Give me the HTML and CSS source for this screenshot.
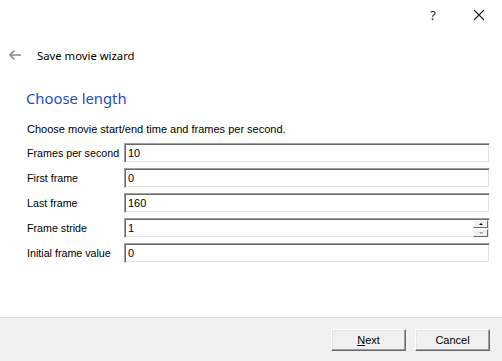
FILE: index.html
```html
<!DOCTYPE html>
<html lang="en">
<head>
  <meta charset="UTF-8">
  <title>Save movie wizard</title>
  <link rel="stylesheet" href="styles.css">
</head>
<body>

  <div class="window">
    <div class="titlebar">
      <span class="title-btn help">?</span>
      <span class="title-btn close">
        <svg width="12" height="12" viewBox="0 0 12 12"><path d="M1 1L11 11M11 1L1 11" stroke="#222" stroke-width="1.1" fill="none"/></svg>
      </span>
    </div>

    <div class="header">
      <svg class="back" width="14" height="12" viewBox="0 0 14 12"><path d="M13 6H2M6.5 1.5L2 6l4.5 4.5" stroke="#8a8a8a" stroke-width="1.6" fill="none"/></svg>
      <span class="wizard-title">Save movie wizard</span>
    </div>

    <div class="content">
      <h1>Choose length</h1>
      <p class="desc">Choose movie start/end time and frames per second.</p>

      <div class="form">
        <label>Frames per second</label>
        <div class="field">10</div>

        <label>First frame</label>
        <div class="field">0</div>

        <label>Last frame</label>
        <div class="field">160</div>

        <label>Frame stride</label>
        <div class="field spin">
          1
          <div class="spin-btns">
            <span class="spin-btn"><i class="up"></i></span>
            <span class="spin-btn"><i class="down"></i></span>
          </div>
        </div>

        <label>Initial frame value</label>
        <div class="field">0</div>
      </div>
    </div>

    <div class="footer">
      <button class="btn"><u>N</u>ext</button>
      <button class="btn">Cancel</button>
    </div>
  </div>

</body>
</html>
```

FILE: styles.css
```css
body {
  margin: 0;
  background: #fff;
  font-family: 'Liberation Sans', Arial, sans-serif;
  font-size: 11px;
  color: #000;
}

.window {
  width: 502px;
  height: 361px;
  display: flex;
  flex-direction: column;
  overflow: hidden;
}

.titlebar {
  height: 30px;
  display: flex;
  justify-content: flex-end;
  align-items: center;
}

.title-btn {
  width: 46px;
  height: 30px;
  display: flex;
  align-items: center;
  justify-content: center;
}

.help {
  font-family: 'Noto Sans', sans-serif;
  font-size: 13px;
  color: #222;
}

.header {
  height: 20px;
  margin-top: 15px;
  display: flex;
  align-items: center;
  padding-left: 8px;
}

.back {
  margin-right: 15px;
}

.wizard-title {
  font-family: 'Noto Sans', sans-serif;
  font-size: 11.3px;
  color: #000;
}

.content {
  flex: 1;
  padding: 0 12px 0 27px;
}

h1 {
  font-family: 'Noto Sans', sans-serif;
  font-weight: normal;
  font-size: 14.8px;
  color: #1c4fc4;
  margin: 22px 0 0 -1px;
  line-height: 22px;
}

.desc {
  margin: 14px 0 0;
  line-height: 13px;
}

.form {
  margin-top: 7px;
  display: grid;
  grid-template-columns: 97px 1fr;
  row-gap: 5px;
  align-items: center;
}

.form label {
  font-size: 10.7px;
}

.field {
  height: 20px;
  box-sizing: border-box;
  border-top: 1px solid #a0a0a0;
  border-left: 1px solid #a0a0a0;
  border-right: 1px solid #fff;
  border-bottom: 1px solid #fff;
  box-shadow: inset 1px 1px 0 #696969, inset -1px -1px 0 #e3e3e3;
  padding: 0 3px;
  line-height: 18px;
  position: relative;
}

.spin-btns {
  position: absolute;
  right: 1px;
  top: 1px;
  display: flex;
  flex-direction: column;
  gap: 1px;
}

.spin-btn {
  width: 15px;
  height: 8px;
  background: #f0f0f0;
  box-sizing: border-box;
  border-right: 1px solid #696969;
  border-bottom: 1px solid #696969;
  border-top: 1px solid #fff;
  border-left: 1px solid #fff;
  display: flex;
  align-items: center;
  justify-content: center;
}

.spin-btn i {
  width: 0;
  height: 0;
  border-left: 2px solid transparent;
  border-right: 2px solid transparent;
}

.spin-btn .up {
  border-bottom: 2px solid #000;
}

.spin-btn .down {
  border-top: 2px solid #999;
}

.footer {
  height: 43px;
  background: #f0f0f0;
  border-top: 1px solid #dfdfdf;
  display: flex;
  justify-content: flex-end;
  align-items: center;
  gap: 9px;
  padding-right: 12px;
}

.btn {
  width: 75px;
  height: 22px;
  font-family: 'Liberation Sans', Arial, sans-serif;
  font-size: 11px;
  color: #000;
  background: #f0f0f0;
  border: 1px solid;
  border-color: #fff #696969 #696969 #fff;
  box-shadow: inset -1px -1px 0 #a0a0a0, inset 1px 1px 0 #e3e3e3;
  padding: 0;
}
```
